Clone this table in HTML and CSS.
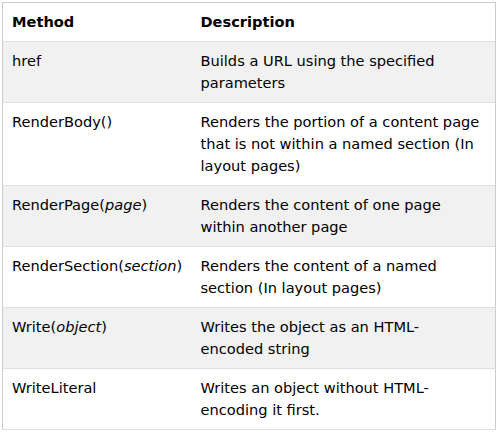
FILE: index.html
```html
<!DOCTYPE html>
<html>
<head>
<meta charset="utf-8">
<link rel="stylesheet" href="styles.css">
</head>
<body>
<table class="ref">
  <colgroup><col class="col-method"><col class="col-desc"></colgroup>
  <tr class="head"><th>Method</th><th>Description</th></tr>
  <tr class="odd"><td>href</td><td>Builds a URL using the specified parameters</td></tr>
  <tr><td>RenderBody()</td><td>Renders the portion of a content page that is not within a named section (In layout pages)</td></tr>
  <tr class="odd"><td>RenderPage(<i>page</i>)</td><td>Renders the content of one page within another page</td></tr>
  <tr><td>RenderSection(<i>section</i>)</td><td>Renders the content of a named section (In layout pages)</td></tr>
  <tr class="odd"><td>Write(<i>object</i>)</td><td>Writes the object as an HTML-<br>encoded string</td></tr>
  <tr><td>WriteLiteral</td><td>Writes an object without HTML-encoding it first.</td></tr>
</table>
</body>
</html>
```
FILE: styles.css
```css
html, body {
  margin: 0;
  padding: 0;
  background: #fff;
}
body {
  padding: 2px;
  font-family: "DejaVu Sans", Verdana, sans-serif;
  font-size: 14.6px;
  line-height: 22px;
  color: #000;
}
.ref {
  border-collapse: collapse;
  border: 1px solid #ccc;
  width: 494px;
  table-layout: fixed;
}
.col-method {
  width: 189px;
}
.ref tr {
  border-bottom: 1px solid #ddd;
}
.ref th, .ref td {
  text-align: left;
  vertical-align: top;
  padding: 8px 8px 8px 9px;
}
.ref th {
  font-weight: bold;
}
.ref .odd {
  background: #f1f1f1;
}
```
